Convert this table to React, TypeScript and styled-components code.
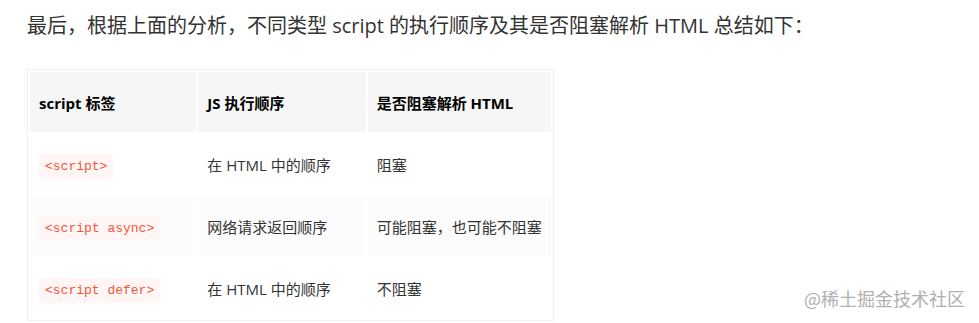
import styled, { createGlobalStyle } from "styled-components"

const rows = [
    { tag: "<script>", order: "在 HTML 中的顺序", block: "阻塞" },
    { tag: "<script async>", order: "网络请求返回顺序", block: "可能阻塞，也可能不阻塞" },
    { tag: "<script defer>", order: "在 HTML 中的顺序", block: "不阻塞" },
]

export default function App(){
    const body = rows.map((item, i) => {
        return(
            <Row key={item.tag} $striped={i % 2 === 1}>
                <Cell><Code>{item.tag}</Code></Cell>
                <Cell>{item.order}</Cell>
                <Cell>{item.block}</Cell>
            </Row>
        )
    })
    return(
        <Page>
            <Global />
            <Lead>最后，根据上面的分析，不同类型 script 的执行顺序及其是否阻塞解析 HTML 总结如下：</Lead>
            <Table>
                <colgroup>
                    <col style={{ width: 166 }} />
                    <col style={{ width: 167 }} />
                    <col style={{ width: 183 }} />
                </colgroup>
                <thead>
                    <tr>
                        <Head>script 标签</Head>
                        <Head>JS 执行顺序</Head>
                        <Head>是否阻塞解析 HTML</Head>
                    </tr>
                </thead>
                <tbody>{body}</tbody>
            </Table>
            <Watermark>@稀土掘金技术社区</Watermark>
        </Page>
    )
}

const Global = createGlobalStyle`
    html, body {
        margin: 0;
        padding: 0;
        background: #fff;
    }
    body {
        font-family: "Open Sans", "Noto Sans CJK SC", sans-serif;
        color: #333;
    }
`

const Page = styled.div`
    position: relative;
    width: 979px;
    height: 323px;
    padding: 10px 0 0 27px;
    box-sizing: border-box;
    overflow: hidden;
`

const Lead = styled.p`
    margin: 0 0 27px;
    font-size: 20px;
    line-height: 32px;
    color: #333;
    white-space: nowrap;
`

const Table = styled.table`
    border: 1px solid #f0f0f0;
    border-collapse: separate;
    border-spacing: 2px;
    table-layout: fixed;
    width: 527px;
    font-size: 15px;
`

const Head = styled.th`
    height: 60px;
    padding: 0 9px;
    background: #f6f6f6;
    color: #000;
    font-weight: 700;
    text-align: left;
    white-space: nowrap;
`

const Row = styled.tr<{ $striped: boolean }>`
    background: ${p => p.$striped ? "#fcfcfc" : "#fff"};
`

const Cell = styled.td`
    height: 60px;
    padding: 0 9px;
    color: #333;
    white-space: nowrap;
`

const Code = styled.code`
    font-family: "Liberation Mono", monospace;
    font-size: 13px;
    color: #f4553a;
    background: #fff6f5;
    padding: 5px 6px;
    border-radius: 3px;
`

const Watermark = styled.div`
    position: absolute;
    right: 14px;
    bottom: 12px;
    font-size: 18px;
    color: #b0b0b0;
    font-family: "Noto Sans CJK SC", sans-serif;
`
